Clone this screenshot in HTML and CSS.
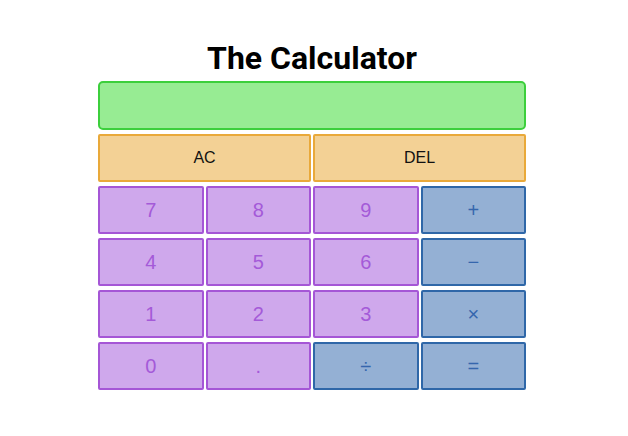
FILE: index.html
```html
<!DOCTYPE html>
<html lang="en">
<head>
  <meta charset="UTF-8" />
  <title>The Calculator</title>
  <link rel="stylesheet" href="styles.css">
</head>
<body>
  <div class="calc">
    <h1>The Calculator</h1>
    <div class="display" id="display"></div>

    <div class="top-row">
      <button class="btn fn">AC</button>
      <button class="btn fn">DEL</button>
    </div>

    <div class="keys">
      <button class="btn num">7</button>
      <button class="btn num">8</button>
      <button class="btn num">9</button>
      <button class="btn op">+</button>

      <button class="btn num">4</button>
      <button class="btn num">5</button>
      <button class="btn num">6</button>
      <button class="btn op">&minus;</button>

      <button class="btn num">1</button>
      <button class="btn num">2</button>
      <button class="btn num">3</button>
      <button class="btn op">&times;</button>

      <button class="btn num">0</button>
      <button class="btn num">.</button>
      <button class="btn op">&divide;</button>
      <button class="btn op">=</button>
    </div>
  </div>
</body>
</html>
```

FILE: styles.css
```css
body {
  margin: 0;
  padding: 0 4px 0 0;
  background: #ffffff;
  font-family: "Liberation Sans", Arial, sans-serif;
}

.calc {
  width: 428px;
  margin: 0 auto;
  padding-top: 40px;
}

h1 {
  font-family: Roboto, "Liberation Sans", sans-serif;
  font-size: 32px;
  font-weight: 700;
  text-align: center;
  margin: 0 0 4px;
  line-height: 37px;
  color: #000;
}

.display {
  height: 45px;
  background: #97ec93;
  border: 2px solid #3ccf3c;
  border-radius: 5px;
  margin-bottom: 4px;
}

.top-row {
  display: grid;
  grid-template-columns: 1fr 1fr;
  gap: 2px;
  margin-bottom: 4px;
}

.keys {
  display: grid;
  grid-template-columns: repeat(4, 1fr);
  column-gap: 2px;
  row-gap: 4px;
}

.btn {
  height: 48px;
  border-radius: 2px;
  border: 2px solid;
  font-family: "Liberation Sans", Arial, sans-serif;
  cursor: pointer;
  padding: 0;
}

.fn {
  background: #f3d195;
  border-color: #e9a93a;
  color: #111;
  font-size: 16px;
}

.num {
  background: #cfa8ec;
  border-color: #a556d6;
  color: #a45ad8;
  font-size: 20px;
}

.op {
  background: #94b0d4;
  border-color: #2f67a8;
  color: #3566ad;
  font-size: 20px;
}
```
